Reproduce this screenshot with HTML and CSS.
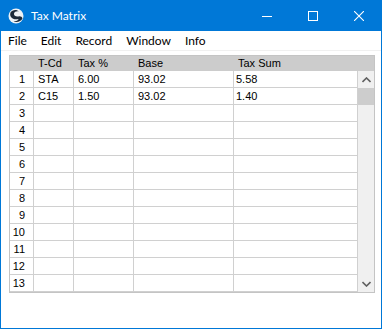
FILE: index.html
```html
<!DOCTYPE html>
<html lang="en">

<head>
    <meta charset="UTF-8" />
    <title>Tax Matrix</title>
    <link rel="stylesheet" href="styles.css">
</head>

<body>
    <div class="window">
        <div class="titlebar">
            <svg class="app-icon" width="16" height="16" viewBox="0 0 16 16">
                <circle cx="8" cy="8" r="7.5" fill="#eef2f6" />
                <path d="M2.5 4.5 C4 1.5 9 1 11 3.5 C9 2.8 6.5 3.5 6 5.5 C5.6 7.5 8 9 10.5 8.5 C12.5 8 14 9 14.5 10.5 C13 13.5 9 15 5.5 13.5 C8 13.5 10.5 12.5 10.5 11 C8 11.5 4.5 11.5 3 9 C2 7.5 2 6 2.5 4.5 Z" fill="#1c2a3a" />
            </svg>
            <span class="title">Tax Matrix</span>
            <div class="controls">
                <div class="ctl">
                    <svg width="10" height="10" viewBox="0 0 10 10"><path d="M0 5.5 H10" stroke="#fff" stroke-width="1" /></svg>
                </div>
                <div class="ctl">
                    <svg width="10" height="10" viewBox="0 0 10 10"><rect x="0.5" y="0.5" width="9" height="9" fill="none" stroke="#fff" stroke-width="1" /></svg>
                </div>
                <div class="ctl">
                    <svg width="10" height="10" viewBox="0 0 10 10"><path d="M0 0 L10 10 M10 0 L0 10" stroke="#fff" stroke-width="1.1" /></svg>
                </div>
            </div>
        </div>

        <div class="menubar">
            <span>File</span>
            <span>Edit</span>
            <span>Record</span>
            <span>Window</span>
            <span>Info</span>
        </div>

        <div class="matrix">
            <div class="hd num"></div>
            <div class="hd">T-Cd</div>
            <div class="hd">Tax %</div>
            <div class="hd">Base</div>
            <div class="hd">Tax Sum</div>
            <div class="hd sb-head"></div>

            <div class="scrollbar">
                <div class="arrow">
                    <svg width="9" height="6" viewBox="0 0 9 6"><path d="M0.5 5 L4.5 1 L8.5 5" fill="none" stroke="#606060" stroke-width="1.6" /></svg>
                </div>
                <div class="thumb"></div>
                <div class="track"></div>
                <div class="arrow">
                    <svg width="9" height="6" viewBox="0 0 9 6"><path d="M0.5 1 L4.5 5 L8.5 1" fill="none" stroke="#606060" stroke-width="1.6" /></svg>
                </div>
            </div>

            <div class="num">1</div><div>STA</div><div>6.00</div><div>93.02</div><div class="sum">5.58</div>
            <div class="num">2</div><div>C15</div><div>1.50</div><div>93.02</div><div class="sum">1.40</div>
            <div class="num">3</div><div></div><div></div><div></div><div></div>
            <div class="num">4</div><div></div><div></div><div></div><div></div>
            <div class="num">5</div><div></div><div></div><div></div><div></div>
            <div class="num">6</div><div></div><div></div><div></div><div></div>
            <div class="num">7</div><div></div><div></div><div></div><div></div>
            <div class="num">8</div><div></div><div></div><div></div><div></div>
            <div class="num">9</div><div></div><div></div><div></div><div></div>
            <div class="num">10</div><div></div><div></div><div></div><div></div>
            <div class="num">11</div><div></div><div></div><div></div><div></div>
            <div class="num">12</div><div></div><div></div><div></div><div></div>
            <div class="num">13</div><div></div><div></div><div></div><div></div>
        </div>
    </div>
</body>

</html>
```

FILE: styles.css
```css
:root {
    --win-blue: #0078d7;
    --grid-line: #d0d0d0;
    --head-bg: #cccccc;
    --text: #000000;
}

* {
    box-sizing: border-box;
}

body {
    margin: 0;
    padding: 0;
    background: #ffffff;
}

.window {
    width: 382px;
    height: 329px;
    border: 1px solid var(--win-blue);
    border-top: none;
    background: #ffffff;
    font-family: 'Lato', sans-serif;
    color: var(--text);
}

.titlebar {
    height: 31px;
    background: var(--win-blue);
    display: flex;
    align-items: center;
    color: #ffffff;
    margin: 0 -1px;
}

.app-icon {
    margin-left: 8px;
    margin-right: 7px;
}

.title {
    font-size: 12px;
    flex: 1;
}

.controls {
    display: flex;
    height: 100%;
}

.ctl {
    width: 46px;
    height: 100%;
    display: flex;
    align-items: center;
    justify-content: center;
}

.ctl svg {
    display: block;
}

.menubar {
    height: 20px;
    display: flex;
    align-items: center;
    gap: 14px;
    padding: 0 0 1px 7px;
    font-size: 12px;
    border-bottom: 1px solid #f0f0f0;
}

.matrix {
    margin: 4px 6px 0 8px;
    display: grid;
    grid-template-columns: 24px 40px 60px 100px 124px 16px;
    grid-template-rows: 15px repeat(13, 17px);
    border: 1px solid #c4c4c4;
    font-family: 'Liberation Sans', sans-serif;
    font-size: 11px;
}

.matrix > div {
    border-right: 1px solid var(--grid-line);
    border-bottom: 1px solid var(--grid-line);
    padding-left: 4px;
    line-height: 16px;
    white-space: nowrap;
    overflow: hidden;
}

.matrix > .hd {
    background: var(--head-bg);
    border-color: var(--head-bg);
    line-height: 14px;
}

.matrix > .num {
    text-align: right;
    padding: 0 8px 0 0;
}

.matrix > .hd.num {
    padding: 0;
}

.matrix > .sb-head {
    border-right: none;
}

.matrix > .sum {
    padding-left: 2px;
}

.matrix > .scrollbar {
    grid-column: 6;
    grid-row: 2 / span 13;
    border: none;
    padding: 0;
    background: #f0f0f0;
    display: flex;
    flex-direction: column;
}

.arrow {
    height: 17px;
    display: flex;
    align-items: center;
    justify-content: center;
}

.arrow svg {
    display: block;
}

.thumb {
    height: 17px;
    background: #cdcdcd;
}

.track {
    flex: 1;
}
```
